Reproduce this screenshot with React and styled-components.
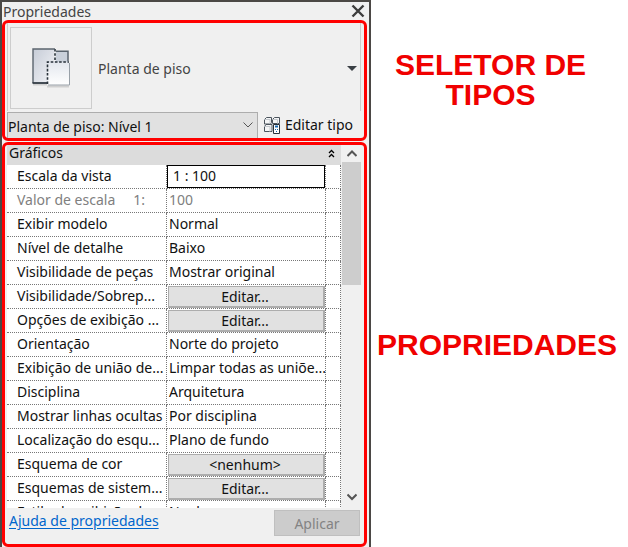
import React from "react"
import styled, { createGlobalStyle, css } from "styled-components"

const GlobalStyle = createGlobalStyle`
  *, *::before, *::after {
    box-sizing: border-box;
  }
  body {
    margin: 0;
    background: white;
    color: #111;
    font-family: "Noto Sans", "Open Sans", sans-serif;
    font-size: 14px;
    line-height: 20px;
  }
  button, input, select {
    font: inherit;
    color: inherit;
  }
`

const Page = styled.main`
  display: flex;
  height: 100vh;
`

const Palette = styled.section`
  display: flex;
  flex: 1;
  flex-direction: column;
  min-width: 0;
  padding-right: 2px;
  background: #f0f0f0;
  border: 2px solid #4b4845;
  border-bottom: none;
`

const TitleBar = styled.header`
  display: flex;
  align-items: center;
  justify-content: space-between;
  height: 18px;
  padding: 0 2px 0 1px;
  color: #444;
`

const Title = styled.h1`
  margin: 0;
  padding-top: 2px;
  font-size: 14px;
  font-weight: 400;
`

const PlainButton = styled.button`
  display: flex;
  align-items: center;
  padding: 0;
  background: none;
  border: none;
`

const Highlight = styled.div`
  display: flex;
  flex-direction: column;
  min-height: 0;
  padding: 0 3px 0 2px;
  border: 3px solid red;
  border-radius: 6px;
`

const SelectorGroup = styled(Highlight)`
  flex: none;
  margin-bottom: 1px;
`

const PropertiesGroup = styled(Highlight)`
  flex: 1;
`

const TypeSelector = styled(PlainButton)`
  gap: 6px;
  height: 88px;
  margin-bottom: 1px;
  padding: 2px 3px 0 2px;
  color: #444;
  border: solid #cdcdcd;
  border-width: 0 1px;
`

const Preview = styled.span`
  display: flex;
  align-items: center;
  justify-content: center;
  width: 82px;
  height: 82px;
  border: 1px solid #cdcdcd;
`

const TypeName = styled.span`
  flex: 1;
  padding-top: 2px;
  text-align: left;
`

const InstanceRow = styled.div`
  display: flex;
  gap: 6px;
  height: 26px;
`

const SelectBox = styled.div`
  display: grid;
  flex: 1;
  align-items: center;

  > * {
    grid-area: 1 / 1;
  }
  > svg {
    justify-self: end;
    margin-right: 5px;
    pointer-events: none;
  }
`

const Select = styled.select`
  width: 100%;
  height: 26px;
  padding: 3px 20px 0 0;
  appearance: none;
  background: #e1e1e1;
  border: 1px solid #adadad;
  border-bottom: none;
  border-radius: 0;
`

const EditTypeButton = styled(PlainButton)`
  gap: 4px;
  padding-right: 8px;
`

const ListArea = styled.div`
  display: flex;
  flex: 1;
  min-height: 0;
`

const List = styled.div`
  flex: 1;
  min-width: 0;
  overflow: hidden;
  background: white;
`

const GroupHeader = styled(PlainButton)`
  justify-content: space-between;
  width: 100%;
  height: 20px;
  padding: 0 6px 4px 2px;
  background: #dcdcdc;
`

const Table = styled.table`
  width: 100%;
  table-layout: fixed;
  border-spacing: 0;
`

const cell = css`
  height: 24px;
  padding: 0 0 2px;
  border: dotted #777;
  border-width: 0 1px 1px 0;
  font-weight: 400;
  text-align: left;
  white-space: nowrap;
`

const NameCell = styled.th`
  ${cell}
  width: 160px;
  padding-left: 10px;
  color: ${props => props.$disabled ? "#808080" : "inherit"};
`

const ScaleMark = styled.span`
  margin-left: 18px;
`

const ValueCell = styled.td`
  ${cell}
  padding-left: 2px;
  color: ${props => props.$disabled ? "#808080" : "inherit"};
`

const ControlCell = styled.td`
  ${cell}
  padding: ${props => props.$type === "button" ? "0 0 0 1px" : "0"};
`

const SpareCell = styled.td`
  ${cell}
  width: 15px;
`

const ScaleInput = styled.input`
  display: block;
  width: 100%;
  height: 23px;
  padding: 0 5px 2px;
  background: white;
  border: 1px solid black;
  outline: none;
`

const ValueButton = styled.button`
  display: block;
  width: 100%;
  height: 22px;
  padding: 1px 2px 0 0;
  line-height: 18px;
  background: #e1e1e1;
  border: solid #adadad;
  border-width: 1px 2px 2px 1px;
`

const ScrollBar = styled.div`
  display: flex;
  flex-direction: column;
  align-items: center;
  width: 20px;
  padding-left: 1px;
`

const ScrollButton = styled(PlainButton)`
  justify-content: center;
  width: 19px;
  height: ${props => props.$tall ? "22px" : "17px"};
`

const ScrollThumb = styled.div`
  width: 19px;
  height: 123px;
  margin-bottom: auto;
  background: #cdcdcd;
`

const Footer = styled.footer`
  display: flex;
  flex: none;
  align-items: flex-start;
  justify-content: space-between;
  height: 36px;
  padding: 2px 1px 8px 2px;
`

const HelpLink = styled.a`
  padding-top: 1px;
  color: #0066cc;
  text-underline-offset: 2px;
`

const ApplyButton = styled.button`
  width: 86px;
  height: 26px;
  padding: 2px 0 0;
  color: #838383;
  background: #cccccc;
  border: 1px solid #bfbfbf;
`

const Notes = styled.aside`
  display: flex;
  flex: none;
  flex-direction: column;
  width: 257px;
  padding-top: 50px;
  gap: 220px;
`

const Note = styled.p`
  margin: 0;
  padding-right: ${props => props.$inset ? "18px" : "5px"};
  color: #f00000;
  font-family: "Liberation Sans", Arial, sans-serif;
  font-size: 30px;
  font-weight: 700;
  line-height: 30px;
  text-align: center;
`

const CloseIcon = () => (
  <svg width="14" height="14" viewBox="0 0 14 14" fill="none" stroke="#3d3d3d" strokeWidth="2.4">
    <path d="M1.5 1.5 12.5 12.5M12.5 1.5 1.5 12.5" />
  </svg>
)

const PlanIcon = () => (
  <svg width="40" height="40" viewBox="0 0 40 40" fill="none">
    <defs>
      <linearGradient id="sheet" x1="0" y1="0" x2="1" y2="1">
        <stop offset="0" stopColor="#c6ccd7" />
        <stop offset="1" stopColor="#f4f5f8" />
      </linearGradient>
      <linearGradient id="front" x1="0" y1="0" x2="0" y2="1">
        <stop offset="0" stopColor="#e3e7ee" />
        <stop offset="1" stopColor="#ffffff" />
      </linearGradient>
    </defs>
    <path d="M2 36.500h14M16 38.500h22" stroke="#cfcfcf" strokeWidth="2" />
    <path d="M24 3h13v11H24z" fill="#c9d0da" />
    <path d="M2 1h22v34H2z" fill="url(#sheet)" />
    <path d="M16.500 14H38v23H16.500z" fill="url(#front)" />
    <path d="M24 1H2v34" stroke="#5b646e" strokeWidth="1.400" />
    <path d="M1.500 35h15" stroke="#333c45" strokeWidth="1.800" />
    <path d="M25 3.300h12V13" stroke="#59636d" strokeWidth="1.500" />
    <path d="M17 37h21.500V15" stroke="#98a0a8" />
    <path d="M16.500 36V14H38" stroke="#29323b" strokeWidth="1.600" strokeDasharray="2.600 1.600" />
    <path d="M24 1v12" stroke="#f5f5f5" strokeWidth="1.600" />
    <path d="M24 1v12" stroke="#29323b" strokeWidth="1.600" strokeDasharray="2.600 1.600" />
  </svg>
)

const EditTypeIcon = () => (
  <svg width="17" height="17" viewBox="0 0 17 17" fill="#f4f5f6" stroke="#4b545d">
    <path d="M.5 2.500 2.500.5h5v5l-1 1.500h-6zM8.500 2.500l2-2h5v6h-7z" />
    <path d="M.5 9.500 2 7.500h6v7H.5z" />
    <path d="M.5 2.500h5.500v4M8.500 2.500h5v4M.5 9.500h5.500v5" stroke="#c3c8cd" />
    <path d="M9.500 7.500h6v9h-6z" fill="#fff" stroke="#27313a" />
    <path d="M11 9.500h3" stroke="#1769b0" strokeWidth="2" />
    <path d="M11 12.500h1M13 12.500h1M12 14.500h1" stroke="#1769b0" />
  </svg>
)

const Chevron = ({ up, weight = 1 }) => (
  <svg width="10" height="8" viewBox="0 0 10 8" fill="none" stroke="#555" strokeWidth={weight}>
    <path d={up ? "M.5 6 5 1.500 9.500 6" : "M.5 1.500 5 6 9.500 1.500"} />
  </svg>
)

const CollapseIcon = () => (
  <svg width="7" height="9" viewBox="0 0 7 9" fill="none" stroke="black" strokeWidth="1.300">
    <path d="M1 4 3.500 1.500 6 4M1 8 3.500 5.500 6 8" />
  </svg>
)

const ArrowIcon = () => (
  <svg width="10" height="5" viewBox="0 0 10 5" fill="#3a3f44">
    <path d="M0 0h10L5 5z" />
  </svg>
)

const rows = [
  { name: "Escala da vista", value: "1 : 100", type: "input" },
  { name: "Valor de escala", mark: "1:", value: "100", disabled: true },
  { name: "Exibir modelo", value: "Normal" },
  { name: "Nível de detalhe", value: "Baixo" },
  { name: "Visibilidade de peças", value: "Mostrar original" },
  { name: "Visibilidade/Sobrep...", value: "Editar...", type: "button" },
  { name: "Opções de exibição ...", value: "Editar...", type: "button" },
  { name: "Orientação", value: "Norte do projeto" },
  { name: "Exibição de união de...", value: "Limpar todas as uniõe..." },
  { name: "Disciplina", value: "Arquitetura" },
  { name: "Mostrar linhas ocultas", value: "Por disciplina" },
  { name: "Localização do esqu...", value: "Plano de fundo" },
  { name: "Esquema de cor", value: "<nenhum>", type: "button" },
  { name: "Esquemas de sistem...", value: "Editar...", type: "button" },
  { name: "Estilo de exibição d...", value: "Nenhum" },
]

const PropertyRow = ({ row, id }) => (
  <tr>
    <NameCell scope="row" id={id} $disabled={row.disabled}>
      {row.name}
      {row.mark && <ScaleMark>{row.mark}</ScaleMark>}
    </NameCell>
    {row.type ? (
      <ControlCell $type={row.type}>
        {row.type === "input"
          ? <ScaleInput type="text" aria-labelledby={id} defaultValue={row.value} />
          : <ValueButton type="button" aria-describedby={id}>{row.value}</ValueButton>}
      </ControlCell>
    ) : (
      <ValueCell $disabled={row.disabled}>{row.value}</ValueCell>
    )}
    <SpareCell />
  </tr>
)

const App = () => (
  <Page>
    <GlobalStyle />
    <Palette>
      <TitleBar>
        <Title>Propriedades</Title>
        <PlainButton type="button" aria-label="Fechar"><CloseIcon /></PlainButton>
      </TitleBar>
      <SelectorGroup>
        <TypeSelector type="button">
          <Preview><PlanIcon /></Preview>
          <TypeName>Planta de piso</TypeName>
          <ArrowIcon />
        </TypeSelector>
        <InstanceRow>
          <SelectBox>
            <Select aria-label="Vista">
              <option>Planta de piso: Nível 1</option>
            </Select>
            <Chevron />
          </SelectBox>
          <EditTypeButton type="button"><EditTypeIcon />Editar tipo</EditTypeButton>
        </InstanceRow>
      </SelectorGroup>
      <PropertiesGroup>
        <ListArea>
          <List>
            <GroupHeader type="button">Gráficos<CollapseIcon /></GroupHeader>
            <Table>
              <tbody>
                {rows.map((row, i) => <PropertyRow key={row.name} row={row} id={`property-${i}`} />)}
              </tbody>
            </Table>
          </List>
          <ScrollBar>
            <ScrollButton type="button" aria-label="Rolar para cima"><Chevron up weight={2} /></ScrollButton>
            <ScrollThumb />
            <ScrollButton type="button" aria-label="Rolar para baixo" $tall><Chevron weight={2} /></ScrollButton>
          </ScrollBar>
        </ListArea>
        <Footer>
          <HelpLink href="#ajuda">Ajuda de propriedades</HelpLink>
          <ApplyButton type="button" disabled>Aplicar</ApplyButton>
        </Footer>
      </PropertiesGroup>
    </Palette>
    <Notes>
      <Note $inset>SELETOR DE TIPOS</Note>
      <Note>PROPRIEDADES</Note>
    </Notes>
  </Page>
)

export default App
